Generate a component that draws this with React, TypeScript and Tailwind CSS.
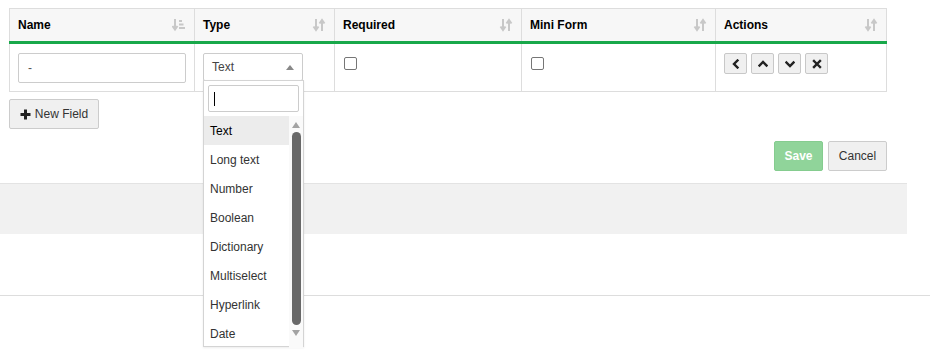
import React from 'react';

const SortIcon = ({ amount }: { amount?: boolean }) =>
  amount ? (
    <svg width="14" height="14" viewBox="0 0 14 14" className="text-[#c8c8c8]">
      <path d="M3 1v9M0.5 8l2.5 3.5L5.5 8" stroke="currentColor" strokeWidth="2" fill="none" />
      <rect x="7" y="2" width="3" height="2" fill="currentColor" />
      <rect x="7" y="5.5" width="4.5" height="2" fill="currentColor" />
      <rect x="7" y="9" width="6" height="2" fill="currentColor" />
    </svg>
  ) : (
    <svg width="14" height="14" viewBox="0 0 14 14" className="text-[#c8c8c8]">
      <path d="M4 1v10M1.5 8.5L4 12l2.5-3.5" stroke="currentColor" strokeWidth="2" fill="none" />
      <path d="M10 13V3M7.5 5.5L10 2l2.5 3.5" stroke="currentColor" strokeWidth="2" fill="none" />
    </svg>
  );

const Chk = () => <div className="w-[13px] h-[13px] border border-[#767676] rounded-[2px] bg-white" />;

const ActBtn = ({ d }: { d: string }) => (
  <button className="w-[23px] h-[21px] flex items-center justify-center bg-[#f0f0f0] border border-[#c8c8c8] rounded-[2px]">
    <svg width="10" height="10" viewBox="0 0 10 10">
      <path d={d} stroke="#222" strokeWidth="2.4" fill="none" strokeLinecap="square" />
    </svg>
  </button>
);

const types = ['Text', 'Long text', 'Number', 'Boolean', 'Dictionary', 'Multiselect', 'Hyperlink', 'Date'];

export default function App() {
  const th = 'h-[34px] px-2 text-left font-bold text-black border-r border-[#dddddd]';
  return (
    <div className="w-[930px] h-[354px] bg-white relative overflow-hidden text-[12px] text-[#333]" style={{ fontFamily: '"Liberation Sans", Arial, sans-serif' }}>
      <div className="pt-2 pl-[9px]">
        <table className="border-collapse w-[878px] table-fixed border border-[#dddddd]">
          <thead>
            <tr className="bg-[#f7f7f7] border-b-[3px] border-b-[#18a84a]">
              <th className={`${th} w-[185px]`}>
                <div className="flex justify-between items-center">Name<SortIcon amount /></div>
              </th>
              <th className={`${th} w-[140px]`}>
                <div className="flex justify-between items-center">Type<SortIcon /></div>
              </th>
              <th className={`${th} w-[187px]`}>
                <div className="flex justify-between items-center">Required<SortIcon /></div>
              </th>
              <th className={`${th} w-[194px]`}>
                <div className="flex justify-between items-center">Mini Form<SortIcon /></div>
              </th>
              <th className={th}>
                <div className="flex justify-between items-center">Actions<SortIcon /></div>
              </th>
            </tr>
          </thead>
          <tbody>
            <tr className="h-[49px] align-top">
              <td className="border-r border-[#dddddd] pt-[9px] pl-[8px] pr-2">
                <div className="h-[30px] w-[168px] border border-[#cccccc] rounded-[2px] px-[9px] flex items-center text-[#555]">-</div>
              </td>
              <td className="border-r border-[#dddddd] pt-[9px] pl-[8px] relative">
                <div className="h-[28px] w-[100px] border border-[#cccccc] rounded-[2px] pl-[8px] pr-[8px] flex items-center justify-between text-[#444]">
                  <span>Text</span>
                  <span className="w-0 h-0 border-l-[4px] border-r-[4px] border-b-[5px] border-l-transparent border-r-transparent border-b-[#888]" />
                </div>
              </td>
              <td className="border-r border-[#dddddd] pt-[13px] pl-[9px]"><Chk /></td>
              <td className="border-r border-[#dddddd] pt-[13px] pl-[9px]"><Chk /></td>
              <td className="pt-[9px] pl-[8px]">
                <div className="flex gap-[4px]">
                  <ActBtn d="M6.5 1.5L3 5l3.5 3.5" />
                  <ActBtn d="M1.5 6.5L5 3l3.5 3.5" />
                  <ActBtn d="M1.5 3.5L5 7l3.5-3.5" />
                  <ActBtn d="M2 2l6 6M8 2l-6 6" />
                </div>
              </td>
            </tr>
          </tbody>
        </table>
      </div>

      <div className="pl-[9px] mt-[7px]">
        <button className="h-[30px] w-[90px] flex items-center justify-center gap-[4px] bg-[#f0f0f0] border border-[#cccccc] rounded-[2px] text-[#333]">
          <svg width="11" height="11" viewBox="0 0 11 11"><path d="M5.5 0.5v10M0.5 5.5h10" stroke="#222" strokeWidth="3" /></svg>
          New Field
        </button>
      </div>

      <div className="flex justify-end gap-[5px] pr-[43px] mt-[12px]">
        <button className="h-[30px] w-[49px] bg-[#90d49a] border border-[#85cc8f] rounded-[2px] text-white font-bold">Save</button>
        <button className="h-[30px] w-[59px] bg-[#f0f0f0] border border-[#cccccc] rounded-[2px] text-[#333]">Cancel</button>
      </div>

      <div className="mt-[12px] w-[907px] h-[51px] bg-[#f1f1f1] border-t border-[#e3e3e3]" />
      <div className="mt-[61px] w-[930px] border-t border-[#dddddd]" />

      <div className="absolute left-[203px] top-[80px] w-[101px] h-[267px] bg-white border border-[#d4d4d4] shadow-[0_1px_2px_rgba(0,0,0,0.08)]">
        <div className="px-[4px] pt-[4px]">
          <div className="h-[27px] border border-[#cccccc] rounded-[2px] flex items-center pl-[5px]">
            <div className="w-px h-[14px] bg-black" />
          </div>
        </div>
        <div className="flex mt-[4px]">
          <div className="flex-1">
            {types.map((t, i) => (
              <div key={t} className={`h-[29px] flex items-center pl-[6px] ${i === 0 ? 'bg-[#ececec] text-black' : 'text-[#333]'}`}>{t}</div>
            ))}
          </div>
          <div className="w-[14px] flex flex-col items-center bg-[#fafafa]">
            <span className="mt-[6px] w-0 h-0 border-l-[4px] border-r-[4px] border-b-[6px] border-l-transparent border-r-transparent border-b-[#a3a3a3]" />
            <div className="w-[9px] h-[193px] mt-[4px] rounded-full bg-[#686868]" />
            <span className="mt-[5px] w-0 h-0 border-l-[4px] border-r-[4px] border-t-[6px] border-l-transparent border-r-transparent border-t-[#a3a3a3]" />
          </div>
        </div>
      </div>
    </div>
  );
}
